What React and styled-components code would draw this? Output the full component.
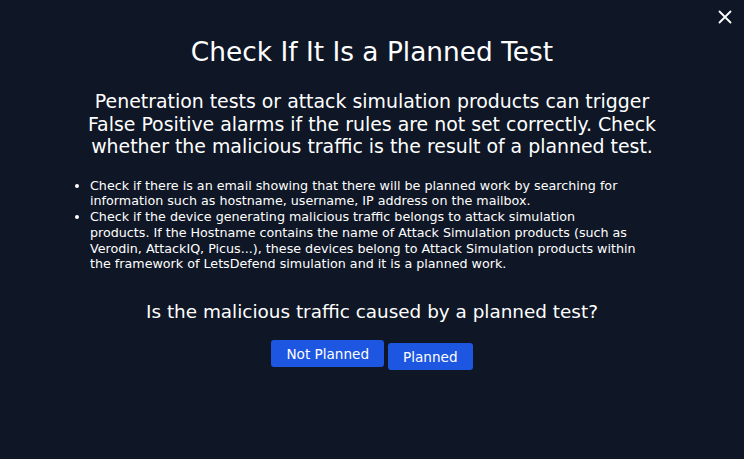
import React from "react";
import styled, { createGlobalStyle } from "styled-components";

const GlobalStyle = createGlobalStyle`
  html, body {
    margin: 0;
    padding: 0;
    background: #0f1726;
  }
  body {
    font-family: "DejaVu Sans", "Open Sans", sans-serif;
    color: #ffffff;
  }
`;

const Modal = styled.div`
  position: relative;
  width: 744px;
  height: 459px;
  background: #0f1726;
  box-sizing: border-box;
  padding: 36px 60px 0 60px;
  display: flex;
  flex-direction: column;
  align-items: center;
`;

const CloseButton = styled.button`
  position: absolute;
  top: 8px;
  right: 10px;
  width: 18px;
  height: 18px;
  padding: 0;
  border: none;
  background: transparent;
  cursor: pointer;
  display: flex;
  align-items: center;
  justify-content: center;
`;

const Title = styled.h2`
  margin: 0;
  font-size: 26.4px;
  font-weight: 400;
  line-height: 32px;
  text-align: center;
`;

const Lead = styled.p`
  margin: 22px 0 0 0;
  font-size: 18.9px;
  line-height: 22.5px;
  text-align: center;
`;

const Steps = styled.ul`
  align-self: stretch;
  margin: 20px 0 0 0;
  padding: 0 0 0 30px;
  font-size: 12.7px;
  line-height: 15.8px;
`;

const Step = styled.li`
  white-space: nowrap;
`;

const Question = styled.p`
  margin: 28px 0 0 0;
  font-size: 18.4px;
  line-height: 24px;
  text-align: center;
`;

const Actions = styled.div`
  display: flex;
  align-items: flex-start;
  gap: 4px;
  margin-top: 16px;
`;

const ActionButton = styled.button`
  margin-top: ${(props) => props.offset || 0}px;
  height: 27px;
  padding: 0 ${(props) => props.padX || 14}px;
  border: none;
  border-radius: 3px;
  background: #1d56e0;
  color: #ffffff;
  font-family: inherit;
  font-size: 13.6px;
  cursor: pointer;
`;

const App = () => {
  return (
    <>
      <GlobalStyle />
      <Modal>
        <CloseButton aria-label="Close">
          <svg width="14" height="14" viewBox="0 0 14 14">
            <path d="M1.5 1.5 L12.5 12.5 M12.5 1.5 L1.5 12.5" stroke="#ffffff" strokeWidth="1.8" strokeLinecap="round" />
          </svg>
        </CloseButton>
        <Title>Check If It Is a Planned Test</Title>
        <Lead>
          Penetration tests or attack simulation products can trigger
          <br />
          False Positive alarms if the rules are not set correctly. Check
          <br />
          whether the malicious traffic is the result of a planned test.
        </Lead>
        <Steps>
          <Step>
            Check if there is an email showing that there will be planned work by searching for
            <br />
            information such as hostname, username, IP address on the mailbox.
          </Step>
          <Step>
            Check if the device generating malicious traffic belongs to attack simulation
            <br />
            products. If the Hostname contains the name of Attack Simulation products (such as
            <br />
            Verodin, AttackIQ, Picus...), these devices belong to Attack Simulation products within
            <br />
            the framework of LetsDefend simulation and it is a planned work.
          </Step>
        </Steps>
        <Question>Is the malicious traffic caused by a planned test?</Question>
        <Actions>
          <ActionButton padX={15}>Not Planned</ActionButton>
          <ActionButton padX={15} offset={3}>Planned</ActionButton>
        </Actions>
      </Modal>
    </>
  );
};

export default App;
